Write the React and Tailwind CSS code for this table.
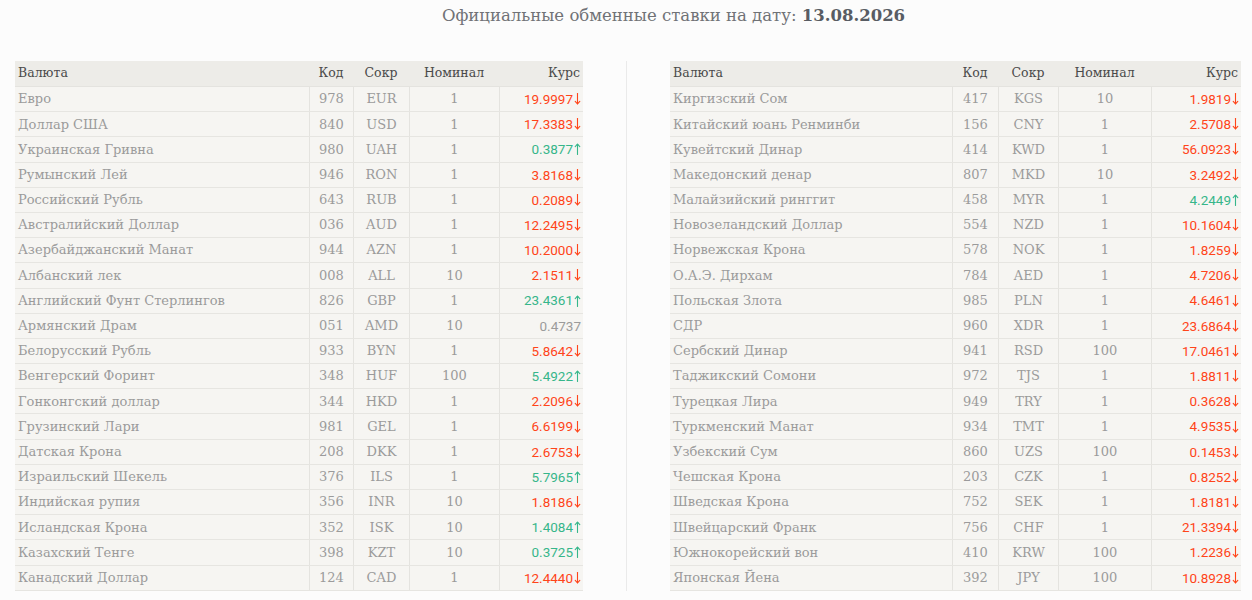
import React from "react";

const left = [
  ["Евро", "978", "EUR", "1", "19.9997", "d"],
  ["Доллар США", "840", "USD", "1", "17.3383", "d"],
  ["Украинская Гривна", "980", "UAH", "1", "0.3877", "u"],
  ["Румынский Лей", "946", "RON", "1", "3.8168", "d"],
  ["Российский Рубль", "643", "RUB", "1", "0.2089", "d"],
  ["Австралийский Доллар", "036", "AUD", "1", "12.2495", "d"],
  ["Азербайджанский Манат", "944", "AZN", "1", "10.2000", "d"],
  ["Албанский лек", "008", "ALL", "10", "2.1511", "d"],
  ["Английский Фунт Стерлингов", "826", "GBP", "1", "23.4361", "u"],
  ["Армянский Драм", "051", "AMD", "10", "0.4737", "n"],
  ["Белорусский Рубль", "933", "BYN", "1", "5.8642", "d"],
  ["Венгерский Форинт", "348", "HUF", "100", "5.4922", "u"],
  ["Гонконгский доллар", "344", "HKD", "1", "2.2096", "d"],
  ["Грузинский Лари", "981", "GEL", "1", "6.6199", "d"],
  ["Датская Крона", "208", "DKK", "1", "2.6753", "d"],
  ["Израильский Шекель", "376", "ILS", "1", "5.7965", "u"],
  ["Индийская рупия", "356", "INR", "10", "1.8186", "d"],
  ["Исландская Крона", "352", "ISK", "10", "1.4084", "u"],
  ["Казахский Тенге", "398", "KZT", "10", "0.3725", "u"],
  ["Канадский Доллар", "124", "CAD", "1", "12.4440", "d"],
];

const right = [
  ["Киргизский Сом", "417", "KGS", "10", "1.9819", "d"],
  ["Китайский юань Ренминби", "156", "CNY", "1", "2.5708", "d"],
  ["Кувейтский Динар", "414", "KWD", "1", "56.0923", "d"],
  ["Македонский денар", "807", "MKD", "10", "3.2492", "d"],
  ["Малайзийский ринггит", "458", "MYR", "1", "4.2449", "u"],
  ["Новозеландский Доллар", "554", "NZD", "1", "10.1604", "d"],
  ["Норвежская Крона", "578", "NOK", "1", "1.8259", "d"],
  ["О.А.Э. Дирхам", "784", "AED", "1", "4.7206", "d"],
  ["Польская Злота", "985", "PLN", "1", "4.6461", "d"],
  ["СДР", "960", "XDR", "1", "23.6864", "d"],
  ["Сербский Динар", "941", "RSD", "100", "17.0461", "d"],
  ["Таджикский Сомони", "972", "TJS", "1", "1.8811", "d"],
  ["Турецкая Лира", "949", "TRY", "1", "0.3628", "d"],
  ["Туркменский Манат", "934", "TMT", "1", "4.9535", "d"],
  ["Узбекский Сум", "860", "UZS", "100", "0.1453", "d"],
  ["Чешская Крона", "203", "CZK", "1", "0.8252", "d"],
  ["Шведская Крона", "752", "SEK", "1", "1.8181", "d"],
  ["Швейцарский Франк", "756", "CHF", "1", "21.3394", "d"],
  ["Южнокорейский вон", "410", "KRW", "100", "1.2236", "d"],
  ["Японская Йена", "392", "JPY", "100", "10.8928", "d"],
];

const serif = { fontFamily: '"DejaVu Serif", serif' };

function Arrow({ up }) {
  return (
    <svg
      width="7"
      height="12"
      viewBox="0 0 7 12"
      className="ml-[1px]"
      fill="none"
      stroke="currentColor"
      strokeWidth="1.1"
      strokeLinecap="round"
      strokeLinejoin="round"
    >
      {up ? (
        <>
          <path d="M3.5 1.2V11.5" />
          <path d="M1.2 3.6L3.5 1.2L5.8 3.6" />
        </>
      ) : (
        <>
          <path d="M3.5 0.5V10.8" />
          <path d="M1.2 8.4L3.5 10.8L5.8 8.4" />
        </>
      )}
    </svg>
  );
}

function Rate({ v, t }) {
  if (t === "d")
    return (
      <span className="flex items-center text-[#ff4419]">
        {v}
        <Arrow />
      </span>
    );
  if (t === "u")
    return (
      <span className="flex items-center text-[#36b68a]">
        {v}
        <Arrow up />
      </span>
    );
  return <span className="text-[#9b9b9b]">{v}</span>;
}

function Table({ rows, cols, width }) {
  return (
    <div className={width}>
      <div
        className={`grid ${cols} h-[26px] items-center bg-[#edece8] text-[#4a4a4a] text-[12.5px] border-b border-[#e4e3df]`}
        style={serif}
      >
        <div className="pl-[3px]">Валюта</div>
        <div className="text-center">Код</div>
        <div className="text-center">Сокр</div>
        <div className="text-center">Номинал</div>
        <div className="text-right pr-[3px]">Курс</div>
      </div>
      {rows.map((r) => (
        <div
          key={r[2]}
          className={`grid ${cols} h-[25.2px] bg-[#f6f5f2] text-[#9b9b9b] text-[13px] border-b border-[#e6e5e1]`}
          style={serif}
        >
          <div className="pl-[3px] flex items-center whitespace-nowrap">{r[0]}</div>
          <div className="flex items-center justify-center border-l border-[#e4e3df]">{r[1]}</div>
          <div className="flex items-center justify-center border-l border-[#e4e3df]">{r[2]}</div>
          <div className="flex items-center justify-center border-l border-[#e4e3df]">{r[3]}</div>
          <div
            className="flex items-center justify-end pr-[2px] border-l border-[#e4e3df] text-[13.5px]"
            style={{ fontFamily: 'Roboto, "Liberation Sans", sans-serif' }}
          >
            <Rate v={r[4]} t={r[5]} />
          </div>
        </div>
      ))}
    </div>
  );
}

export default function App() {
  return (
    <div className="w-[1252px] h-[600px] bg-[#fcfcfc] overflow-hidden">
      <div
        className="pt-[6px] pl-[95px] text-center text-[16.5px] leading-[20px] text-[#707276]"
        style={serif}
      >
        Официальные обменные ставки на дату:{" "}
        <span className="font-bold text-[#585c63]">13.08.2026</span>
      </div>
      <div className="flex mt-[35px] pl-[15px]">
        <Table
          rows={left}
          width="w-[568px]"
          cols="grid-cols-[294px_44px_56px_90px_84px]"
        />
        <div className="w-[87px] flex justify-center">
          <div className="w-px h-[530px] bg-[#eaeaea]" />
        </div>
        <Table
          rows={right}
          width="w-[571px]"
          cols="grid-cols-[282px_46px_60px_93px_90px]"
        />
      </div>
    </div>
  );
}
